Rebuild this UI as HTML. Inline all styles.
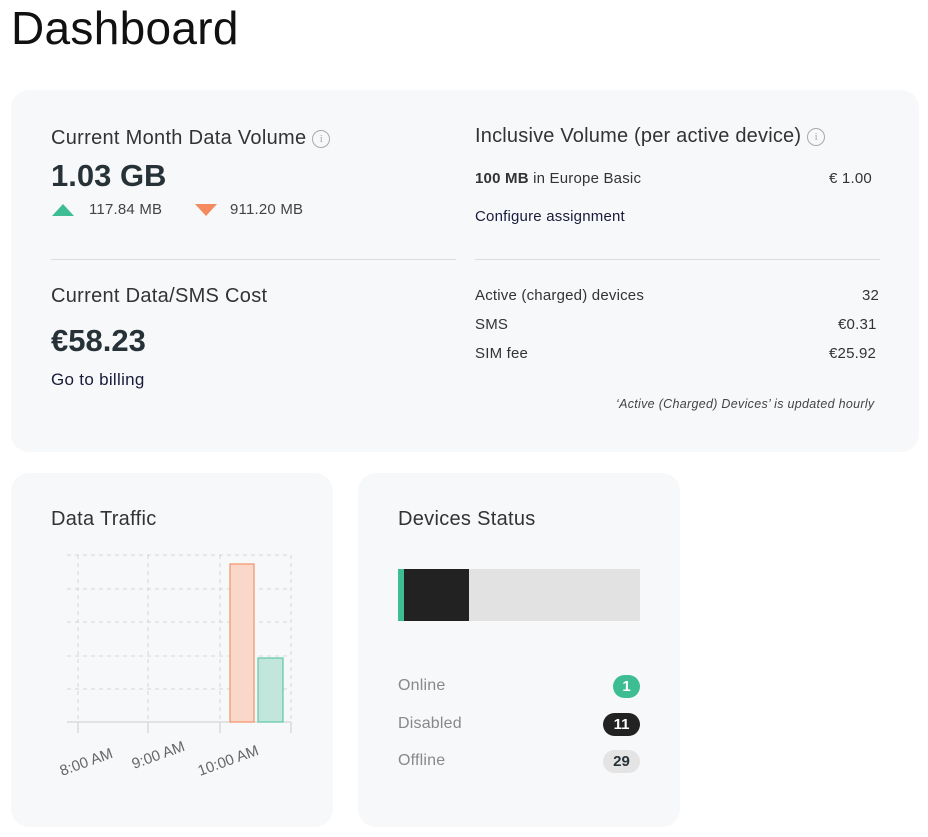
<!DOCTYPE html>
<html><head><style>
body{margin:0;width:928px;height:837px;background:#fff;font-family:"Liberation Sans",sans-serif;color:#222;position:relative;overflow:hidden}
.a{position:absolute;white-space:nowrap}
.card{position:absolute;background:#f7f8fa;border-radius:18px}
.i{display:inline-block;width:16px;height:16px;border:1.3px solid #aaa;border-radius:50%;font-size:11px;color:#aaa;text-align:center;line-height:16px;vertical-align:2px;margin-left:6px;font-family:"Liberation Serif",serif}
.badge{position:absolute;border-radius:12px;height:23px;line-height:23px;text-align:center;font-size:15px;font-weight:bold}
.s{font-size:15px;color:#333;letter-spacing:0.2px}
</style></head><body>
<div class="a" style="left:11px;top:1px;font-size:46px;color:#111;letter-spacing:0.3px">Dashboard</div>
<div class="card" style="left:11px;top:90px;width:908px;height:362px"></div>
<div class="a" style="left:51px;top:127px;font-size:20px;color:#333;letter-spacing:0.3px">Current Month Data Volume<span class="i">i</span></div>
<div class="a" style="left:51px;top:158px;font-size:31px;font-weight:bold;color:#263238">1.03 GB</div>
<svg class="a" style="left:52px;top:204px" width="22" height="12"><polygon points="0,12 11,0 22,12" fill="#3dbd91"/></svg>
<div class="a s" style="left:89px;top:201px;color:#444">117.84 MB</div>
<svg class="a" style="left:195px;top:204px" width="22" height="12"><polygon points="0,0 22,0 11,12" fill="#f58a5f"/></svg>
<div class="a s" style="left:230px;top:201px;color:#444">911.20 MB</div>
<div class="a" style="left:51px;top:259px;width:405px;height:1px;background:#ddd"></div>
<div class="a" style="left:51px;top:285px;font-size:20px;color:#333;letter-spacing:0.3px">Current Data/SMS Cost</div>
<div class="a" style="left:51px;top:323px;font-size:31px;font-weight:bold;color:#263238">€58.23</div>
<div class="a" style="left:51px;top:370px;font-size:17px;color:#1a1a3a;letter-spacing:0.3px">Go to billing</div>
<div class="a" style="left:475px;top:125px;font-size:20px;color:#333;letter-spacing:0.2px">Inclusive Volume (per active device)<span class="i">i</span></div>
<div class="a s" style="left:475px;top:170px"><b>100 MB</b> in Europe Basic</div>
<div class="a s" style="left:829px;top:170px">€ 1.00</div>
<div class="a s" style="left:475px;top:208px;color:#1a1a3a">Configure assignment</div>
<div class="a" style="left:475px;top:259px;width:405px;height:1px;background:#ddd"></div>
<div class="a s" style="left:475px;top:287px">Active (charged) devices</div>
<div class="a s" style="left:862px;top:287px">32</div>
<div class="a s" style="left:475px;top:316px">SMS</div>
<div class="a s" style="left:838px;top:316px">€0.31</div>
<div class="a s" style="left:475px;top:345px">SIM fee</div>
<div class="a s" style="left:829px;top:345px">€25.92</div>
<div class="a" style="left:616px;top:397px;font-size:12.5px;font-style:italic;color:#444;letter-spacing:0.3px">‘Active (Charged) Devices’ is updated hourly</div>

<div class="card" style="left:11px;top:473px;width:322px;height:354px"></div>
<div class="a" style="left:51px;top:508px;font-size:20px;color:#333;letter-spacing:0.3px">Data Traffic</div>
<svg class="a" style="left:40px;top:540px" width="280" height="250">
<g stroke="#d6d6d6" stroke-dasharray="4,4" fill="none">
<line x1="27" y1="15" x2="251" y2="15"/><line x1="27" y1="49" x2="251" y2="49"/><line x1="27" y1="82" x2="251" y2="82"/><line x1="27" y1="116" x2="251" y2="116"/><line x1="27" y1="149" x2="251" y2="149"/>
<line x1="38" y1="15" x2="38" y2="182"/><line x1="108" y1="15" x2="108" y2="182"/><line x1="180" y1="15" x2="180" y2="182"/><line x1="251" y1="15" x2="251" y2="182"/>
</g>
<line x1="27" y1="182" x2="251" y2="182" stroke="#ccc"/>
<g stroke="#ccc"><line x1="38" y1="182" x2="38" y2="193"/><line x1="108" y1="182" x2="108" y2="193"/><line x1="180" y1="182" x2="180" y2="193"/><line x1="251" y1="182" x2="251" y2="193"/></g>
<rect x="190" y="24" width="24" height="158" fill="#f9d8ca" stroke="#f5916a" stroke-width="1.2"/>
<rect x="218" y="118" width="25" height="64" fill="#c2e6db" stroke="#5cc9a2" stroke-width="1.2"/>
<g font-family="Liberation Sans" font-size="15" fill="#666">
<text x="22" y="236" transform="rotate(-20 22 236)">8:00 AM</text>
<text x="94" y="229" transform="rotate(-20 94 229)">9:00 AM</text>
<text x="160" y="236" transform="rotate(-20 160 236)">10:00 AM</text>
</g></svg>

<div class="card" style="left:358px;top:473px;width:322px;height:354px"></div>
<div class="a" style="left:398px;top:508px;font-size:20px;color:#333;letter-spacing:0.3px">Devices Status</div>
<div class="a" style="left:398px;top:569px;width:242px;height:52px;background:#e2e2e2"></div>
<div class="a" style="left:398px;top:569px;width:6px;height:52px;background:#3dbd91"></div>
<div class="a" style="left:404px;top:569px;width:65px;height:52px;background:#222"></div>
<div class="a" style="left:398px;top:677px;font-size:16px;color:#888;letter-spacing:0.2px">Online</div>
<div class="a" style="left:398px;top:715px;font-size:16px;color:#888;letter-spacing:0.2px">Disabled</div>
<div class="a" style="left:398px;top:752px;font-size:16px;color:#888;letter-spacing:0.2px">Offline</div>
<div class="badge" style="left:613px;top:675px;width:27px;background:#3dbd91;color:#fff">1</div>
<div class="badge" style="left:603px;top:713px;width:37px;background:#222;color:#fff">11</div>
<div class="badge" style="left:603px;top:750px;width:37px;background:#e4e4e4;color:#263238">29</div>
</body></html>
